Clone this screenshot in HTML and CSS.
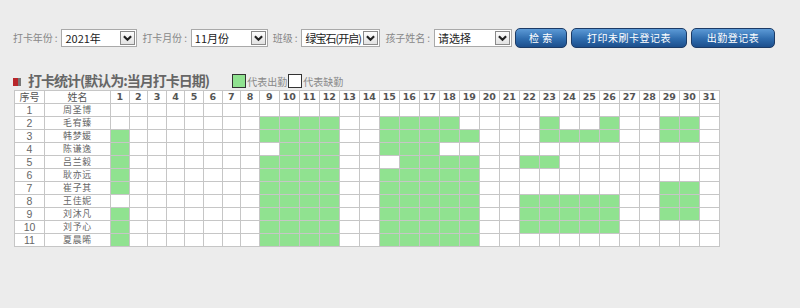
FILE: index.html
```html
<!DOCTYPE html>
<html lang="zh-CN">
<head>
  <meta charset="UTF-8">
  <title>打卡统计</title>
  <link rel="stylesheet" href="styles.css">
</head>
<body>

  <div class="toolbar">
    <span class="lbl">打卡年份 :</span>
    <div class="sel sel-year"><span>2021年</span><i class="arrow"><svg viewBox="0 0 10 10"><path d="M2 3.5 L5 6.5 L8 3.5" /></svg></i></div>
    <span class="lbl">打卡月份 :</span>
    <div class="sel sel-month"><span>11月份</span><i class="arrow"><svg viewBox="0 0 10 10"><path d="M2 3.5 L5 6.5 L8 3.5" /></svg></i></div>
    <span class="lbl">班级 :</span>
    <div class="sel sel-class"><span>绿宝石(开启)</span><i class="arrow"><svg viewBox="0 0 10 10"><path d="M2 3.5 L5 6.5 L8 3.5" /></svg></i></div>
    <span class="lbl">孩子姓名 :</span>
    <div class="sel sel-kid"><span>请选择</span><i class="arrow"><svg viewBox="0 0 10 10"><path d="M2 3.5 L5 6.5 L8 3.5" /></svg></i></div>
    <button class="btn btn-search">检 索</button>
    <button class="btn btn-print">打印未刷卡登记表</button>
    <button class="btn btn-list">出勤登记表</button>
  </div>

  <div class="stat-head">
    <span class="mark"></span>
    <h3>打卡统计(默认为:当月打卡日期)</h3>
    <span class="legend legend-first"><i class="box on"></i>代表出勤</span>
    <span class="legend"><i class="box"></i>代表缺勤</span>
  </div>

  <table class="grid" id="grid">
    <colgroup id="cols"></colgroup>
    <thead><tr id="head"></tr></thead>
    <tbody id="rows"></tbody>
  </table>

<script>
  const alunos = [
    ['周圣博', []],
    ['毛宥臻', [9, 10, 11, 12, 15, 16, 17, 18, 23, 26, 29, 30]],
    ['韩梦媛', [1, 9, 10, 11, 12, 15, 16, 17, 18, 19, 23, 24, 25, 26, 29, 30]],
    ['陈谦逸', [1, 10, 11, 12, 15, 16, 17]],
    ['吕兰毅', [1, 9, 10, 11, 12, 16, 17, 18, 19, 22, 23]],
    ['耿亦远', [1, 9, 10, 11, 12, 15, 16, 17, 18, 19]],
    ['崔子其', [1, 9, 10, 11, 12, 15, 16, 17, 18, 19, 29, 30]],
    ['王佳妮', [9, 10, 11, 12, 15, 16, 17, 18, 19, 22, 23, 24, 25, 26, 29, 30]],
    ['刘沐凡', [1, 9, 10, 11, 12, 15, 16, 17, 18, 19, 22, 23, 24, 25, 26, 29, 30]],
    ['刘予心', [1, 9, 10, 11, 12, 15, 16, 17, 18, 19, 22, 23, 24, 25, 26]],
    ['夏晨晞', [1, 9, 10, 11, 12, 15, 16, 17, 18, 19]]
  ];

  const cols = document.getElementById('cols');
  const head = document.getElementById('head');
  let colHtml = '<col class="c-seq"><col class="c-name">';
  let headHtml = '<th class="t-cn">序号</th><th class="t-cn">姓名</th>';
  for (let d = 1; d <= 31; d++) {
    colHtml += `<col class="${d < 9 ? 'c-day' : 'c-day2'}">`;
    headHtml += `<th>${d}</th>`;
  }
  cols.innerHTML = colHtml;
  head.innerHTML = headHtml;

  const rows = document.getElementById('rows');
  alunos.forEach((item, index) => {
    const tr = document.createElement('tr');
    let html = `<td class="seq">${index + 1}</td><td class="name">${item[0]}</td>`;
    for (let d = 1; d <= 31; d++) {
      html += item[1].includes(d) ? '<td class="on"></td>' : '<td></td>';
    }
    tr.innerHTML = html;
    rows.appendChild(tr);
  });
</script>

</body>
</html>
```

FILE: styles.css
```css
body {
  margin: 0;
  background: #ececec;
  font-family: "Noto Sans CJK SC", "Liberation Sans", sans-serif;
  color: #555;
}

.toolbar {
  display: flex;
  align-items: center;
  padding: 28px 0 0 13px;
  height: 19px;
}
.lbl {
  font-size: 10px;
  color: #888;
  letter-spacing: -0.1px;
  white-space: nowrap;
}
.sel {
  display: flex;
  align-items: center;
  justify-content: space-between;
  box-sizing: border-box;
  height: 18px;
  margin: 0 5px 0 4px;
  padding: 0 1px 0 3px;
  background: #fff;
  border: 1px solid #a9a9a9;
  font-size: 11px;
  color: #222;
}
.sel-year { width: 76px; }
.sel-month { width: 77px; }
.sel-class { width: 79px; letter-spacing: -1px; }
.sel-kid { width: 78px; margin-right: 3px; }
.sel span {
  white-space: nowrap;
  line-height: 16px;
}
.arrow {
  display: block;
  box-sizing: border-box;
  width: 15px;
  height: 14px;
  border: 1px solid #8a8a8a;
  background: linear-gradient(#fdfdfd, #e2e2e2);
}
.arrow svg {
  display: block;
  width: 13px;
  height: 12px;
}
.arrow path {
  fill: none;
  stroke: #222;
  stroke-width: 1.8;
}

.btn {
  height: 20px;
  margin-right: 4px;
  padding: 0;
  border: 1px solid #1c3b66;
  border-radius: 5px;
  background: linear-gradient(#5c9ad6, #2f6cae 55%, #1d4f8c);
  color: #fff;
  font-family: "Noto Sans CJK SC", sans-serif;
  font-size: 10px;
  letter-spacing: 0.5px;
  cursor: pointer;
}
.btn-search { width: 52px; }
.btn-print { width: 116px; }
.btn-list { width: 84px; }

.stat-head {
  display: flex;
  align-items: flex-end;
  padding: 24px 0 0 12px;
  height: 18px;
}
.mark {
  width: 6px;
  height: 8px;
  margin-bottom: 3px;
  background: #b8262b;
  border-right: 3px solid #777;
  box-shadow: 1px 0 0 #ececec inset;
}
.stat-head h3 {
  margin: 0 0 0 7px;
  font-size: 14px;
  font-weight: bold;
  line-height: 18px;
  letter-spacing: -1px;
  color: #666;
}
.legend {
  display: flex;
  align-items: flex-end;
  font-size: 10px;
  line-height: 12px;
  color: #888;
  margin-bottom: 1px;
}
.legend-first {
  margin-left: 23px;
  margin-right: 1px;
}
.box {
  display: block;
  width: 12px;
  height: 12px;
  margin-right: 1px;
  border: 1px solid #333;
  background: #fff;
}
.box.on {
  background: #90e290;
}

.grid {
  margin: 1px 0 0 14px;
  width: 705px;
  table-layout: fixed;
  border-collapse: collapse;
  background: #fff;
}
.c-seq { width: 30px; }
.c-name { width: 66px; }
.c-day { width: 18.6px; }
.c-day2 { width: 20px; }
.grid th, .grid td {
  height: 12px;
  padding: 0;
  border: 1px solid #c6c6c6;
  text-align: center;
  line-height: 12px;
  font-size: 10px;
  color: #666;
  white-space: nowrap;
  overflow: hidden;
}
.grid td.seq {
  font-family: "Liberation Sans", sans-serif;
  font-size: 10.5px;
}
.grid td.name {
  font-size: 8.9px;
  letter-spacing: 0.8px;
}
.grid th {
  font-family: "DejaVu Sans", sans-serif;
  font-size: 9.5px;
  font-weight: bold;
  color: #555;
}
.grid th.t-cn {
  font-family: "Noto Sans CJK SC", sans-serif;
  font-size: 10px;
  font-weight: normal;
}
.grid td.on {
  background: #90e290;
}
```
